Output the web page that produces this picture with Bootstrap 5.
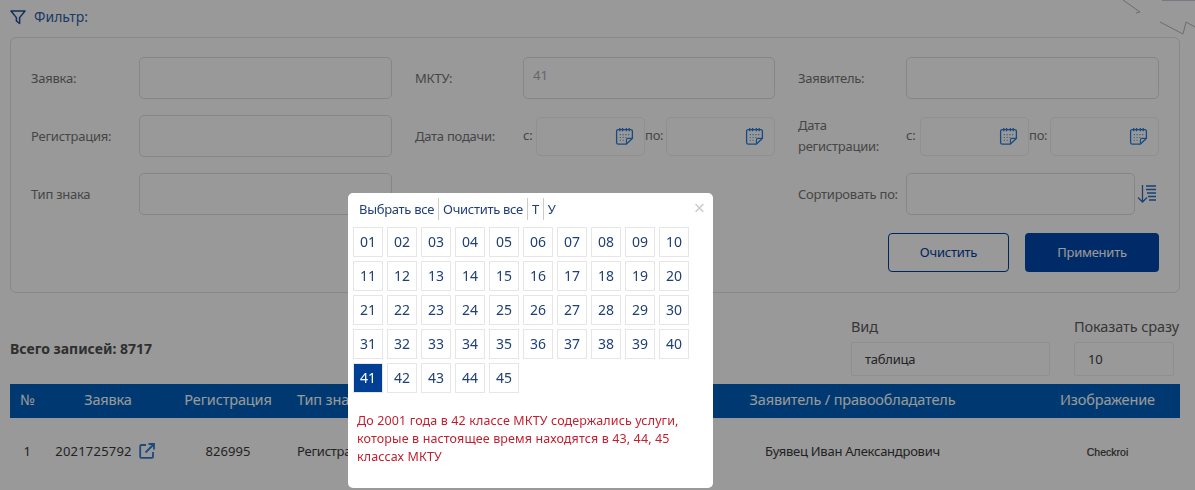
<!DOCTYPE html>
<html lang="ru">
<head>
<meta charset="utf-8">
<title>Фильтр</title>
<link href="https://cdn.jsdelivr.net/npm/bootstrap@5.3.0/dist/css/bootstrap.min.css" rel="stylesheet">
<style>
html,body{height:490px;overflow:hidden;background:#fff}
body{font-family:"Noto Sans","Open Sans",sans-serif;font-size:13px;letter-spacing:-.25px;color:#757575;position:relative}
.pg{width:1195px;padding:0 15px 0 10px}
.deco{position:absolute;left:1120px;top:0}
.flt-head{height:37px;color:#2f61aa;font-size:14px;letter-spacing:0;gap:8px;padding-bottom:4px}
.flt-box{height:256px;border:1px solid #e3e3e3;border-radius:6px;padding:19px 20px 0}
.flt-grid{display:grid;grid-template-columns:361px 360px 361px;column-gap:23px;row-gap:16px}
.fld{height:42px}
.lbl{width:108px;flex:none;line-height:21px}
.inp{height:42px;border-color:#e0e0e0;border-radius:5px;background:#fff;font-size:13px;color:#aaa;padding:0 9px 6px}
.inp:disabled{background:#fff;color:#aaa}
.pre{width:13px;flex:none}
.pre-w{width:14px}
.pre2{width:21px;flex:none}
.dt{height:39px;border:1px solid #f0f0f0;border-radius:5px;flex:1 1 0;min-width:0;padding-right:10px}
.cal{width:19px;height:19px}
.srt{margin-left:2px;flex:none}
.acts{margin-top:18px;gap:16px}
.b-clear,.b-apply{height:39px;font-size:13px;padding:0;border-radius:4px;letter-spacing:-.25px}
.b-clear{width:121px;border:1px solid #00409e;color:#00409e;background:#fff}
.b-apply{width:134px;border:0;background:#0048ae;color:#fff}
.stats{margin-top:24px;height:67px;color:#555}
.tot{font-weight:700;font-size:14px;letter-spacing:0;color:#4f4f4f;padding-top:21px}
.ctl-a{width:199px;margin-right:24px}
.ctl-b{width:106px}
.ctl-lbl{font-size:14.5px;letter-spacing:-.1px;line-height:18px;margin-bottom:7px;white-space:nowrap;color:#5c5c5c}
.sel{height:34px;border:1px solid #efefef;border-radius:2px;font-size:13px;color:#3c3c3c;line-height:32px;padding-left:13px}
.ctl-b .sel{width:100px}
.tbl{table-layout:fixed;width:1170px;margin:0;font-size:13px}
.tbl th{background:#0060bd;color:#fff;font-weight:400;font-size:14.5px;letter-spacing:-.15px;height:34px;padding:0 0 2px;text-align:center;vertical-align:middle;border:0;white-space:nowrap;overflow:hidden;box-shadow:none}
.tbl td{height:68px;padding:0;text-align:center;vertical-align:middle;border:0;color:#393939;white-space:nowrap;overflow:hidden;background:#fff;box-shadow:none}
.tbl .no{padding-right:1px}
.tbl .lft{text-align:left;padding-left:12px}
.tbl .num{letter-spacing:.1px}
.tbl .req{padding-right:6px;letter-spacing:.2px}
.ext{width:16px;height:16px;margin-left:7px;vertical-align:-3px}
.logo-txt{font-family:"Liberation Sans",sans-serif;font-size:10.5px;letter-spacing:0;-webkit-text-stroke:.2px #393939}
.bk{--bs-backdrop-opacity:.4}
.dlg{position:absolute;left:348px;top:193px;width:365px;height:295px;z-index:1055;background:#fff;border:0;border-radius:5px;padding:5px;color:#1f3f77}
.dlg-top{height:29px;padding:0 0 8px 2px;font-size:13px;letter-spacing:-.3px}
.dlg-top a{color:#1f3f77;text-decoration:none;padding:0 4px;line-height:22px;border-right:1px solid #ccc}
.dlg-top a:last-of-type{border-right:0}
.dlg-x{position:absolute;right:8px;top:7px;color:#ccc;font-size:20px;line-height:16px}
.cls-grid{display:grid;grid-template-columns:repeat(10,30px);grid-auto-rows:30px;gap:4px}
.cls{border:1px solid #e6e6e6;font-size:14px;letter-spacing:0;line-height:28px;text-align:center;color:#1f3f77}
.cls-on{background:#003f94;color:#fff}
.note{margin:19px 0 0 4px;color:#c41f2e;font-size:12.5px;letter-spacing:.13px;line-height:18px;width:345px}
</style>
</head>
<body>
<svg class="deco" width="75" height="36" viewBox="0 0 75 36" fill="none" stroke="#b5b5b5" stroke-width="1"><path d="M3 0 20 12 16 13"/><path d="M40 22 63 34 66 22 75 27"/><path d="M42 .5H75" stroke="#c3cad8"/></svg>
<div class="pg">
  <div class="flt-head d-flex align-items-center">
    <svg width="16" height="16" viewBox="0 0 16 16" fill="none" stroke="#1d4f96" stroke-width="1.5" stroke-linejoin="round"><path d="M1 2h14L9.600 8.600V14.500L6.400 12V8.600Z"/></svg>
    <span>Фильтр:</span>
  </div>
  <div class="flt-box">
    <div class="flt-grid">
      <div class="fld d-flex align-items-center"><div class="lbl">Заявка:</div><input class="form-control inp" type="text"></div>
      <div class="fld d-flex align-items-center"><div class="lbl">МКТУ:</div><input class="form-control inp" type="text" value="41" disabled></div>
      <div class="fld d-flex align-items-center"><div class="lbl">Заявитель:</div><input class="form-control inp" type="text"></div>

      <div class="fld d-flex align-items-center"><div class="lbl">Регистрация:</div><input class="form-control inp" type="text"></div>
      <div class="fld d-flex align-items-center"><div class="lbl">Дата подачи:</div>
        <span class="pre">с:</span>
        <div class="dt d-flex align-items-center justify-content-end"><svg class="cal" viewBox="0 0 20 20" fill="none" stroke="#2e7cd5" stroke-width="1.400"><path d="M12 18H3.500A1.800 1.800 0 0 1 1.700 16.200V4.500A1.800 1.800 0 0 1 3.500 2.700H16.500A1.800 1.800 0 0 1 18.300 4.500V12L12 18Z"/><path d="M5 1V4.500M8 1V4.500M12 1V4.500M15 1V4.500"/><path d="M12 18V14A2 2 0 0 1 14 12H18.300" stroke-width="1.200"/><path d="M5 8H6M8 8H9M11 8H12M14 8H15M5 11H6M8 11H9M11 11H12M5 14H6M8 14H9" stroke-width="1.200"/></svg></div>
        <span class="pre2">по:</span>
        <div class="dt d-flex align-items-center justify-content-end"><svg class="cal" viewBox="0 0 20 20" fill="none" stroke="#2e7cd5" stroke-width="1.400"><path d="M12 18H3.500A1.800 1.800 0 0 1 1.700 16.200V4.500A1.800 1.800 0 0 1 3.500 2.700H16.500A1.800 1.800 0 0 1 18.300 4.500V12L12 18Z"/><path d="M5 1V4.500M8 1V4.500M12 1V4.500M15 1V4.500"/><path d="M12 18V14A2 2 0 0 1 14 12H18.300" stroke-width="1.200"/><path d="M5 8H6M8 8H9M11 8H12M14 8H15M5 11H6M8 11H9M11 11H12M5 14H6M8 14H9" stroke-width="1.200"/></svg></div>
      </div>
      <div class="fld d-flex align-items-center"><div class="lbl">Дата регистрации:</div>
        <span class="pre pre-w">с:</span>
        <div class="dt d-flex align-items-center justify-content-end"><svg class="cal" viewBox="0 0 20 20" fill="none" stroke="#2e7cd5" stroke-width="1.400"><path d="M12 18H3.500A1.800 1.800 0 0 1 1.700 16.200V4.500A1.800 1.800 0 0 1 3.500 2.700H16.500A1.800 1.800 0 0 1 18.300 4.500V12L12 18Z"/><path d="M5 1V4.500M8 1V4.500M12 1V4.500M15 1V4.500"/><path d="M12 18V14A2 2 0 0 1 14 12H18.300" stroke-width="1.200"/><path d="M5 8H6M8 8H9M11 8H12M14 8H15M5 11H6M8 11H9M11 11H12M5 14H6M8 14H9" stroke-width="1.200"/></svg></div>
        <span class="pre2">по:</span>
        <div class="dt d-flex align-items-center justify-content-end"><svg class="cal" viewBox="0 0 20 20" fill="none" stroke="#2e7cd5" stroke-width="1.400"><path d="M12 18H3.500A1.800 1.800 0 0 1 1.700 16.200V4.500A1.800 1.800 0 0 1 3.500 2.700H16.500A1.800 1.800 0 0 1 18.300 4.500V12L12 18Z"/><path d="M5 1V4.500M8 1V4.500M12 1V4.500M15 1V4.500"/><path d="M12 18V14A2 2 0 0 1 14 12H18.300" stroke-width="1.200"/><path d="M5 8H6M8 8H9M11 8H12M14 8H15M5 11H6M8 11H9M11 11H12M5 14H6M8 14H9" stroke-width="1.200"/></svg></div>
      </div>

      <div class="fld d-flex align-items-center"><div class="lbl">Тип знака</div><input class="form-control inp" type="text"></div>
      <div class="fld"></div>
      <div class="fld d-flex align-items-center"><div class="lbl">Сортировать по:</div><input class="form-control inp" type="text">
        <svg class="srt" width="22" height="20" viewBox="0 0 22 20" fill="none" stroke="#2a6cc0" stroke-width="1.300"><path d="M5.500 1V18M1 13.500 5.500 18 10 13.500"/><path d="M9 2H19M9 5.500H19M10 9H19M11 12.500H19M12 16H19"/></svg>
      </div>
    </div>
    <div class="acts d-flex justify-content-end">
      <button class="btn b-clear" type="button">Очистить</button>
      <button class="btn b-apply" type="button">Применить</button>
    </div>
  </div>
  <div class="stats d-flex align-items-start">
    <div class="tot flex-grow-1">Всего записей: 8717</div>
    <div class="ctl-a"><div class="ctl-lbl">Вид</div><div class="sel">таблица</div></div>
    <div class="ctl-b"><div class="ctl-lbl">Показать сразу</div><div class="sel">10</div></div>
  </div>
  <table class="table tbl">
    <colgroup><col style="width:35px"><col style="width:126px"><col style="width:114px"><col style="width:63px"><col style="width:392px"><col style="width:225px"><col style="width:70px"><col style="width:145px"></colgroup>
    <thead><tr><th>№</th><th>Заявка</th><th>Регистрация</th><th class="lft">Тип знака</th><th></th><th>Заявитель / правообладатель</th><th></th><th>Изображение</th></tr></thead>
    <tbody><tr>
      <td class="no">1</td>
      <td class="req">2021725792<svg class="ext" viewBox="0 0 16 16" fill="none" stroke="#2e7cd5" stroke-width="1.800"><path d="M7 2H2.200A1 1 0 0 0 1.200 3V13.800A1 1 0 0 0 2.200 14.800H13A1 1 0 0 0 14 13.800V9"/><path d="M6.500 9.500 15 1M9.500 1H15V6.500"/></svg></td>
      <td class="num">826995</td><td class="lft">Регистрация</td><td></td>
      <td>Буявец Иван Александрович</td><td></td>
      <td><span class="logo-txt">Checkroi</span></td>
    </tr></tbody>
  </table>
</div>
<div class="modal-backdrop show bk"></div>
<div class="modal-content dlg">
  <div class="dlg-top d-flex align-items-center"><a href="#">Выбрать все</a><a href="#">Очистить все</a><a href="#">Т</a><a href="#">У</a></div>
  <span class="dlg-x">×</span>
  <div class="cls-grid">
    <div class="cls">01</div><div class="cls">02</div><div class="cls">03</div><div class="cls">04</div><div class="cls">05</div><div class="cls">06</div><div class="cls">07</div><div class="cls">08</div><div class="cls">09</div><div class="cls">10</div>
    <div class="cls">11</div><div class="cls">12</div><div class="cls">13</div><div class="cls">14</div><div class="cls">15</div><div class="cls">16</div><div class="cls">17</div><div class="cls">18</div><div class="cls">19</div><div class="cls">20</div>
    <div class="cls">21</div><div class="cls">22</div><div class="cls">23</div><div class="cls">24</div><div class="cls">25</div><div class="cls">26</div><div class="cls">27</div><div class="cls">28</div><div class="cls">29</div><div class="cls">30</div>
    <div class="cls">31</div><div class="cls">32</div><div class="cls">33</div><div class="cls">34</div><div class="cls">35</div><div class="cls">36</div><div class="cls">37</div><div class="cls">38</div><div class="cls">39</div><div class="cls">40</div>
    <div class="cls cls-on">41</div><div class="cls">42</div><div class="cls">43</div><div class="cls">44</div><div class="cls">45</div>
  </div>
  <div class="note">До 2001 года в 42 классе МКТУ содержались услуги, которые в настоящее время находятся в 43, 44, 45 классах МКТУ</div>
</div>
<script src="https://cdn.jsdelivr.net/npm/bootstrap@5.3.0/dist/js/bootstrap.bundle.min.js"></script>
</body>
</html>
